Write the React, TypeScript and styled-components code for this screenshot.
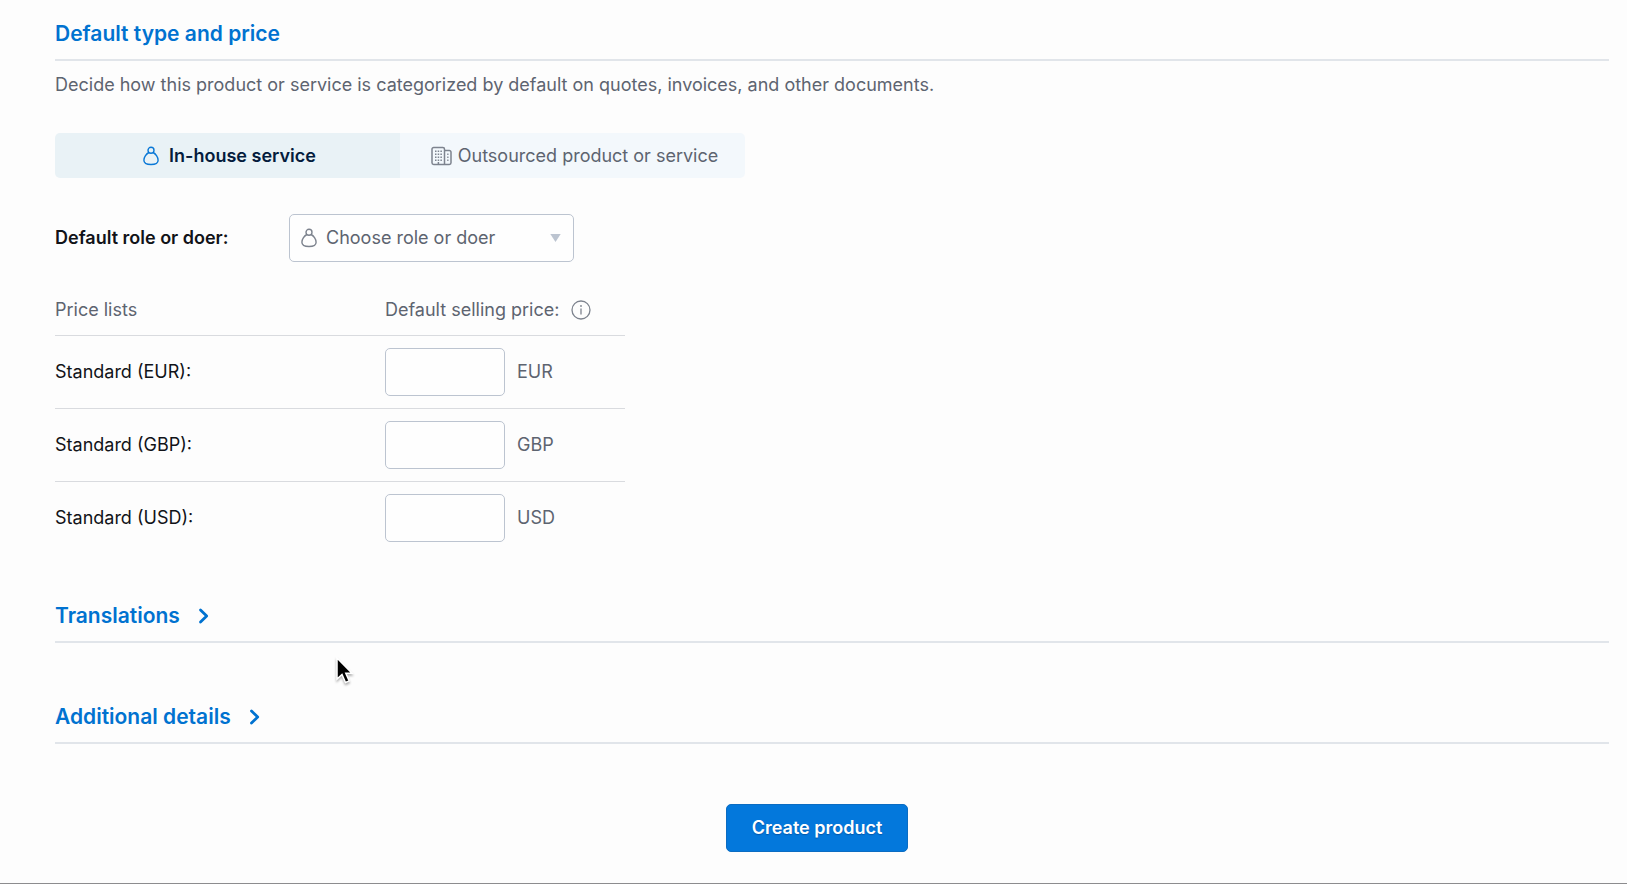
import React, { useState } from "react";
import styled, { createGlobalStyle, css } from "styled-components";

const GlobalStyle = createGlobalStyle`
  *, *::before, *::after { box-sizing: border-box; }
  body {
    margin: 0;
    background: #fdfdfd;
    color: #111318;
    font-family: Inter, "Liberation Sans", sans-serif;
    font-size: 18px;
    line-height: 24px;
  }
  button, input, select { font: inherit; color: inherit; margin: 0; }
`;

const Page = styled.main`
  position: relative;
  min-height: 100vh;
  padding: 18px 18px 24px 55px;
  border-bottom: 1px solid #8c8c8e;
`;

const headingText = css`
  font-size: 21px;
  line-height: 32px;
  font-weight: 600;
  color: #0072d0;
`;

const SectionHeading = styled.h2`
  ${headingText}
  margin: 0;
  padding-bottom: 9px;
  border-bottom: 2px solid #e1e5ea;
`;

const Description = styled.p`
  margin: 12px 0 0;
  color: #5d6470;
`;

const Tabs = styled.div`
  display: flex;
  width: 690px;
  max-width: 100%;
  margin-top: 36px;
  border-radius: 5px;
  overflow: hidden;
`;

const Tab = styled.button<{ $active: boolean }>`
  flex: 1;
  display: flex;
  align-items: center;
  justify-content: center;
  gap: ${(p) => (p.$active ? 10 : 6)}px;
  height: 45px;
  padding: 0 0 0 4px;
  border: 0;
  cursor: pointer;
  background: ${(p) => (p.$active ? "#e9f2f6" : "#f3f8fc")};
  color: ${(p) => (p.$active ? "#041c3d" : "#5d6470")};
  font-weight: ${(p) => (p.$active ? 600 : 400)};
  svg { color: ${(p) => (p.$active ? "#0a78d6" : "#7d838e")}; }
`;

const Field = styled.div`
  display: flex;
  align-items: center;
  margin-top: 36px;
`;

const FieldLabel = styled.label`
  width: 234px;
  font-weight: 600;
`;

const SelectBox = styled.div`
  display: grid;
  grid-template-columns: 48px 1fr 36px;
  align-items: center;
  width: 285px;
  height: 48px;
  color: #7d838e;
  svg { grid-row: 1; pointer-events: none; z-index: 1; }
  svg:first-of-type { grid-column: 1; margin-left: 12px; }
  svg:last-of-type { grid-column: 3; margin-left: 12px; color: #bcc4d0; }
`;

const Select = styled.select`
  grid-area: 1 / 1 / 2 / 4;
  width: 100%;
  height: 48px;
  padding: 0 36px 0 36px;
  appearance: none;
  border: 1px solid #bcc4d0;
  border-radius: 5px;
  background: #fefefe;
  color: #5d6470;
`;

const PriceTable = styled.table`
  width: 570px;
  margin-top: 28px;
  border-collapse: collapse;
  table-layout: fixed;
  th, td { padding: 0; text-align: left; font-weight: 400; }
  thead th { height: 45px; padding-bottom: 5px; color: #5d6470; border-bottom: 1px solid #d9dbdf; }
  tbody tr + tr { border-top: 1px solid #d9dbdf; }
  tbody td { height: 73px; }
  th:first-child { width: 330px; }
`;

const Inline = styled.div`
  display: flex;
  align-items: center;
  gap: 12px;
  color: #5d6470;
`;

const InfoButton = styled.button`
  display: flex;
  padding: 0;
  border: 0;
  background: none;
  color: #7d838e;
`;

const PriceInput = styled.input`
  width: 120px;
  height: 48px;
  padding: 0 12px;
  border: 1px solid #bcc4d0;
  border-radius: 5px;
  background: #fefefe;
`;

const Collapsed = styled.section`
  margin-top: 46px;
  padding-bottom: 9px;
  border-bottom: 2px solid #e1e5ea;
  & + & { margin-top: 58px; }
`;

const CollapsedTitle = styled.h2`
  margin: 0;
  font-size: 21px;
  line-height: 32px;
`;

const Toggle = styled.button`
  ${headingText}
  display: flex;
  align-items: center;
  gap: 18px;
  padding: 0;
  border: 0;
  background: none;
  cursor: pointer;
`;

const Footer = styled.footer`
  display: flex;
  justify-content: center;
  margin-top: 60px;
  padding-right: 30px;
`;

const Submit = styled.button`
  height: 48px;
  padding: 0 25px;
  border: 1px solid #0b6cc2;
  border-radius: 5px;
  background: #0378dc;
  color: #fff;
  font-weight: 600;
  text-shadow: 0 1px 1px rgba(0, 30, 80, 0.35);
`;

const Pointer = styled.svg`
  position: absolute;
  left: 334px;
  top: 656px;
  filter: drop-shadow(0 2px 1px rgba(0, 0, 0, 0.3));
  pointer-events: none;
`;

const PersonIcon = () => (
  <svg width="16" height="20" viewBox="0 0 16 20" fill="none" stroke="currentColor" strokeWidth="1.4" aria-hidden="true">
    <circle cx="8" cy="4.3" r="3" />
    <path d="M5.900 6.500C3.400 7.700 0.900 11.300 0.900 14.200C0.900 17.500 3.800 18.500 8 18.500S15.100 17.500 15.100 14.200C15.100 11.300 12.600 7.700 10.100 6.500" />
  </svg>
);

const BuildingIcon = () => (
  <svg width="21" height="20" viewBox="0 0 21 20" fill="none" stroke="currentColor" strokeWidth="1.5" aria-hidden="true">
    <path d="M13.500 18.500H2.700A1.700 1.700 0 0 1 1 16.800V3.200A1.700 1.700 0 0 1 2.700 1.500H11.800A1.700 1.700 0 0 1 13.500 3.200V18.500H18.300A1.700 1.700 0 0 0 20 16.800V6.200A1.700 1.700 0 0 0 18.300 4.500H13.500" />
    <path d="M4 5.200H5.500M6.700 5.200H8.200M9.400 5.200H10.900M4 8.200H5.500M6.700 8.200H8.200M9.400 8.200H10.900M4 11.200H5.500M6.700 11.200H8.200M9.400 11.200H10.900M4 14.200H5.500M6.700 14.200H8.200M9.400 14.200H10.900M16.200 8.200H17.500M16.200 11.200H17.500M16.200 14.200H17.500M7.400 16V18" />
  </svg>
);

const CaretIcon = () => (
  <svg width="11" height="8" viewBox="0 0 11 8" fill="currentColor" aria-hidden="true">
    <path d="M0.300 0H10.700L5.500 8Z" />
  </svg>
);

const InfoIcon = () => (
  <svg width="20" height="20" viewBox="0 0 20 20" fill="none" stroke="currentColor" strokeWidth="1.300" aria-hidden="true">
    <circle cx="10" cy="10" r="9" />
    <path d="M10 8.600V14.500" />
    <circle cx="10" cy="6" r="0.900" fill="currentColor" stroke="none" />
  </svg>
);

const ChevronIcon = () => (
  <svg width="11" height="16" viewBox="0 0 11 16" fill="none" stroke="currentColor" strokeWidth="2.800" strokeLinecap="round" strokeLinejoin="round" aria-hidden="true">
    <path d="M2.500 2L8.700 8L2.500 14" />
  </svg>
);

const currencies = ["EUR", "GBP", "USD"];

export default function App() {
  const [type, setType] = useState<"inhouse" | "outsourced">("inhouse");
  return (
    <>
      <GlobalStyle />
      <Page>
        <SectionHeading>Default type and price</SectionHeading>
        <Description>
          Decide how this product or service is categorized by default on quotes, invoices, and other documents.
        </Description>
        <Tabs role="tablist" aria-label="Default type">
          <Tab type="button" role="tab" aria-selected={type === "inhouse"} $active={type === "inhouse"} onClick={() => setType("inhouse")}>
            <PersonIcon />
            <span>In-house service</span>
          </Tab>
          <Tab type="button" role="tab" aria-selected={type === "outsourced"} $active={type === "outsourced"} onClick={() => setType("outsourced")}>
            <BuildingIcon />
            <span>Outsourced product or service</span>
          </Tab>
        </Tabs>
        <Field>
          <FieldLabel htmlFor="role">Default role or doer:</FieldLabel>
          <SelectBox>
            <PersonIcon />
            <Select id="role" defaultValue="">
              <option value="">Choose role or doer</option>
            </Select>
            <CaretIcon />
          </SelectBox>
        </Field>
        <PriceTable>
          <thead>
            <tr>
              <th scope="col">Price lists</th>
              <th scope="col">
                <Inline>
                  <span>Default selling price:</span>
                  <InfoButton type="button" aria-label="About the default selling price"><InfoIcon /></InfoButton>
                </Inline>
              </th>
            </tr>
          </thead>
          <tbody>
            {currencies.map((code) => (
              <tr key={code}>
                <th scope="row"><label htmlFor={`price-${code}`}>Standard ({code}):</label></th>
                <td>
                  <Inline>
                    <PriceInput id={`price-${code}`} type="text" inputMode="decimal" />
                    <span>{code}</span>
                  </Inline>
                </td>
              </tr>
            ))}
          </tbody>
        </PriceTable>
        {["Translations", "Additional details"].map((title) => (
          <Collapsed key={title}>
            <CollapsedTitle>
              <Toggle type="button" aria-expanded={false}>
                <span>{title}</span>
                <ChevronIcon />
              </Toggle>
            </CollapsedTitle>
          </Collapsed>
        ))}
        <Footer>
          <Submit type="submit">Create product</Submit>
        </Footer>
        <Pointer width="22" height="30" viewBox="0 0 22 30" aria-hidden="true">
          <path d="M3 2V23L8 18.500L11.500 26.500L15.200 24.900L11.800 17.200H18Z" fill="#000" stroke="#fff" strokeWidth="1.500" />
        </Pointer>
      </Page>
    </>
  );
}
